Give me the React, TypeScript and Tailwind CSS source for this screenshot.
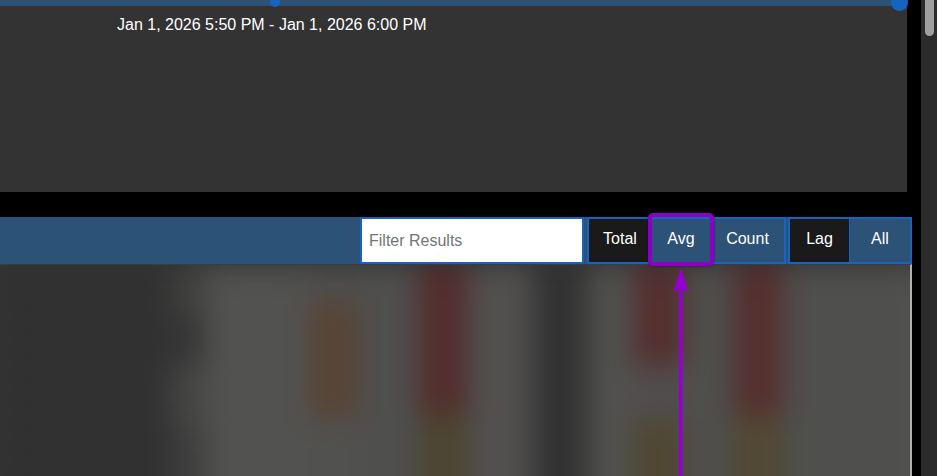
import React from "react";

// blurred results grid: each column is a stack of colour blocks
const columns: { w: number; blocks: { h: number; c: string }[] }[] = [
  { w: 170, blocks: [{ h: 260, c: "#333333" }] },
  { w: 35, blocks: [{ h: 50, c: "#424241" }, { h: 50, c: "#383838" }, { h: 60, c: "#474846" }, { h: 100, c: "#404040" }] },
  { w: 105, blocks: [{ h: 260, c: "#555553" }] },
  { w: 48, blocks: [{ h: 36, c: "#525150" }, { h: 118, c: "#5b4738" }, { h: 106, c: "#545452" }] },
  { w: 60, blocks: [{ h: 260, c: "#525251" }] },
  { w: 50, blocks: [{ h: 150, c: "#562f2e" }, { h: 110, c: "#4f4832" }] },
  { w: 65, blocks: [{ h: 260, c: "#555352" }] },
  { w: 55, blocks: [{ h: 260, c: "#343434" }] },
  { w: 45, blocks: [{ h: 260, c: "#545452" }] },
  { w: 52, blocks: [{ h: 100, c: "#583130" }, { h: 55, c: "#545050" }, { h: 105, c: "#534a34" }] },
  { w: 48, blocks: [{ h: 260, c: "#525250" }] },
  { w: 50, blocks: [{ h: 150, c: "#583130" }, { h: 110, c: "#554b35" }] },
  { w: 160, blocks: [{ h: 260, c: "#525250" }] },
];

function Btn({ label, dark, w }: { label: string; dark?: boolean; w: string }) {
  return (
    <button className={`${w} h-full flex items-center justify-center pb-[3px] text-white text-[16px] ${dark ? "bg-[#1a1a1a]" : "bg-[#2c5278]"}`}>
      {label}
    </button>
  );
}

export default function App() {
  return (
    <div className="relative flex h-[476px] w-[937px] overflow-hidden bg-black font-['Liberation_Sans',Arial,sans-serif]">
      <div className="w-[921px] shrink-0">
        {/* time range panel */}
        <div className="relative h-[192px] w-[907px] bg-[#333333]">
          <div className="h-[6px] bg-[#2c5278]" />
          <div className="absolute left-[270px] top-[-3px] h-[10px] w-[10px] rounded-full bg-[#1565c0]" />
          <div className="absolute left-[891px] top-[-6px] h-[17px] w-[17px] rounded-full bg-[#1565c0]" />
          <p className="mt-[10px] ml-[117px] text-[16px] leading-[18px] text-white">Jan 1, 2026 5:50 PM - Jan 1, 2026 6:00 PM</p>
        </div>

        {/* results header */}
        <div className="mt-[25px] flex h-[47px] w-[912px] items-stretch justify-end bg-[#2c5278]">
          <input
            placeholder="Filter Results"
            className="mr-[3px] h-full w-[224px] border-2 border-[#1565c0] bg-white px-[7px] text-[16px] text-black outline-none placeholder:text-[#757575]"
          />
          <div className="mr-[2px] flex border-2 border-[#1565c0]">
            <Btn label="Total" dark w="w-[62px]" />
            <Btn label="Avg" w="w-[60px]" />
            <Btn label="Count" w="w-[73px]" />
          </div>
          <div className="flex border-2 border-[#1565c0]">
            <Btn label="Lag" dark w="w-[59px]" />
            <div className="w-[1px] bg-[#1565c0]" />
            <Btn label="All" w="w-[60px]" />
          </div>
        </div>

        {/* results table, blurred */}
        <div className="h-[212px] w-[912px] overflow-hidden border-r-2 border-t border-r-[#b0b0b0] border-t-[#3c3c3c] bg-[#343434]">
          <div className="relative h-[260px] blur-[14px]">
            <div className="flex">
              {columns.map((col, i) => (
                <div key={i} className="shrink-0" style={{ width: col.w }}>
                  {col.blocks.map((b, j) => (
                    <div key={j} style={{ height: b.h, background: b.c }} />
                  ))}
                </div>
              ))}
            </div>
            {/* faint row banding */}
            <div className="absolute inset-0 bg-[repeating-linear-gradient(180deg,rgba(0,0,0,0.1)_0px,rgba(0,0,0,0.1)_9px,transparent_9px,transparent_24px)]" />
          </div>
        </div>
      </div>

      {/* scrollbar */}
      <div className="w-4 shrink-0 bg-[#2b2b2b]">
        <div className="mx-auto h-[36px] w-[9px] rounded-b-full bg-[#9f9f9f]" />
      </div>

      {/* annotation: highlight box and arrow */}
      <div className="absolute left-[648px] top-[213px] h-[53px] w-[66px] rounded-[5px] border-4 border-[#8a00c4] shadow-[0_0_2px_rgba(40,0,60,0.8)]" />
      <svg className="absolute left-[671px] top-[267px]" width="20" height="209" viewBox="0 0 20 209">
        <path d="M9.8 1 L17.5 25 L9.8 21 L2 25 Z" fill="#9400d3" />
        <rect x="8" y="20" width="3.5" height="189" fill="#9400d3" />
      </svg>
    </div>
  );
}
